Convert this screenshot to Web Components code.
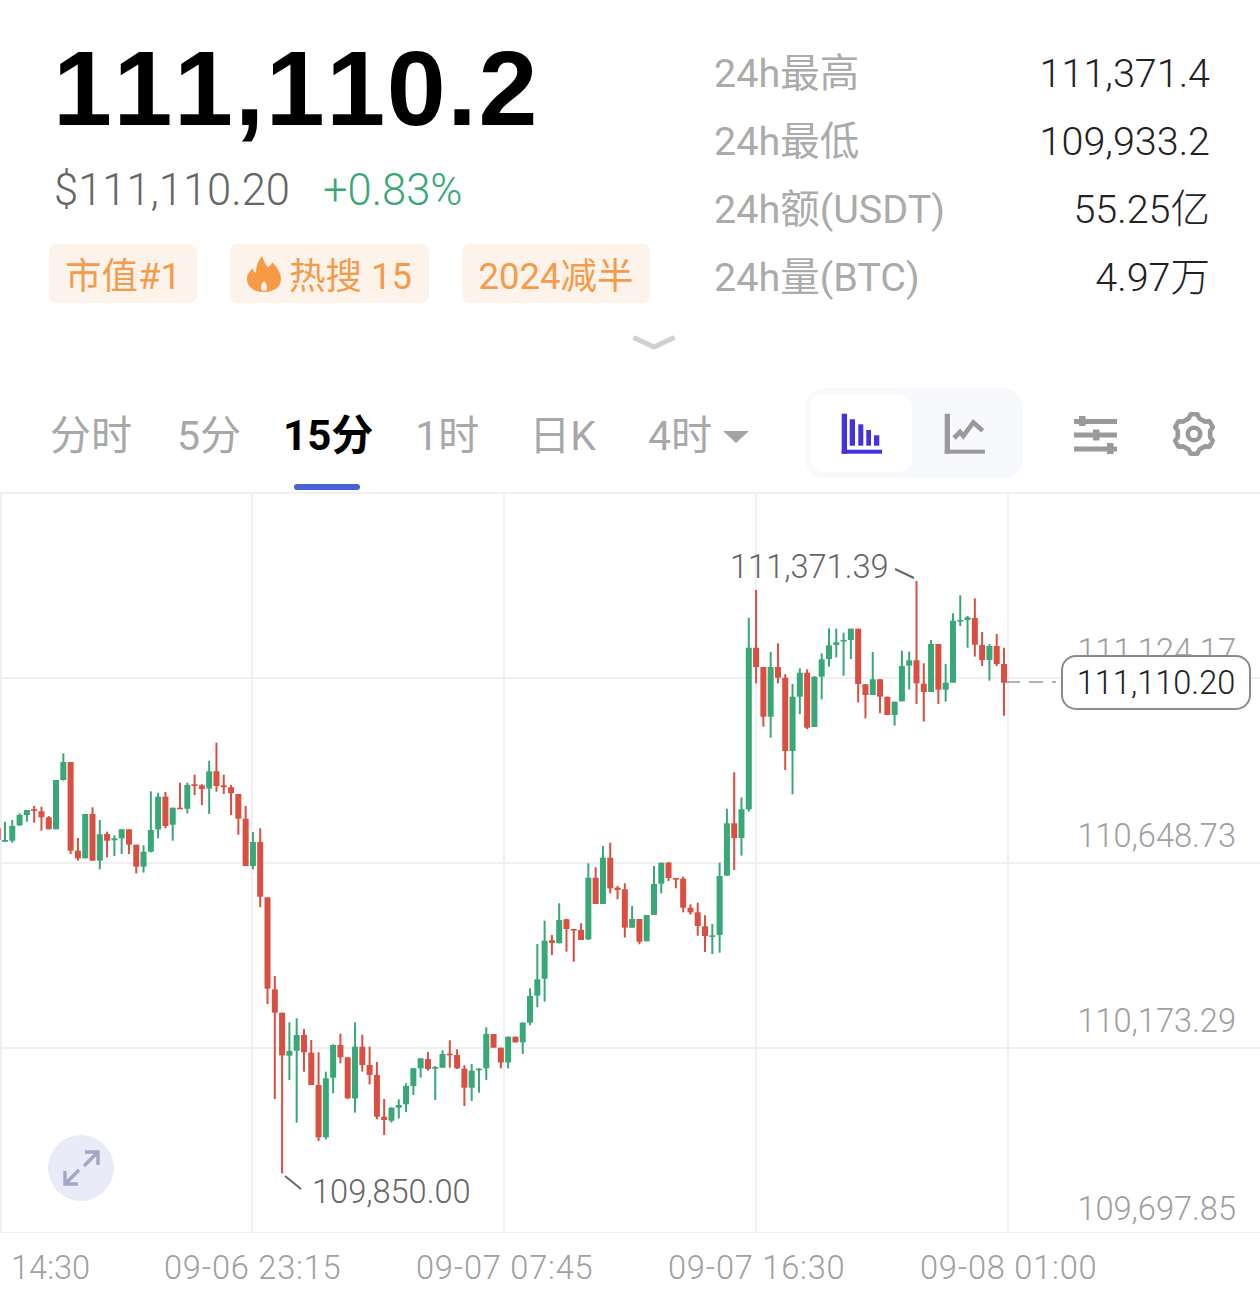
<!DOCTYPE html>
<html lang="zh">
<head>
<meta charset="utf-8">
<title>BTC</title>
<style>
  html, body { margin: 0; background: #fff; }
  body { width: 1260px; height: 1313px; overflow: hidden; font-family: Roboto, "Noto Sans CJK SC", sans-serif; }
</style>
</head>
<body>
<price-header>
  <stat-row slot="stats" label="24h最高" value="111,371.4"></stat-row>
  <stat-row slot="stats" label="24h最低" value="109,933.2"></stat-row>
  <stat-row slot="stats" label="24h额(USDT)" value="55.25亿"></stat-row>
  <stat-row slot="stats" label="24h量(BTC)" value="4.97万"></stat-row>
  <tag-chip slot="tags" style="width:148px">市值#1</tag-chip>
  <tag-chip slot="tags" style="width:199px" flame>热搜 15</tag-chip>
  <tag-chip slot="tags" style="width:188px">2024减半</tag-chip>
</price-header>
<period-bar></period-bar>
<kline-chart></kline-chart>
<time-axis></time-axis>

<script>
const CJK = 'Roboto, "Noto Sans CJK SC", sans-serif';

class StatRow extends HTMLElement {
  connectedCallback() {
    const shadow = this.attachShadow({ mode: 'open' });
    shadow.innerHTML = `
      <style>
        :host { display: flex; justify-content: space-between; align-items: baseline; height: 68px; line-height: 68px; font-size: 39.5px; }
        .l { color: #ababab; font-weight: 400; }
        .v { color: #222; font-weight: 300; }
      </style>
      <span class="l">${this.getAttribute('label')}</span>
      <span class="v">${this.getAttribute('value')}</span>`;
  }
}

class TagChip extends HTMLElement {
  connectedCallback() {
    const shadow = this.attachShadow({ mode: 'open' });
    const flame = this.hasAttribute('flame') ? `
      <svg width="34" height="36" viewBox="0 0 34 36">
        <path fill="#f79a45" d="M15 0c2 5 3 8 6 11 2-1 4-3 4-5 5 5 9 11 9 17 0 8-7 13-17 13S0 31 0 23c0-5 3-8 6-11 0 3 1 4 3 5C9 10 11 5 15 0z"/>
        <path fill="#fdf3ea" d="M17 25c2 2 3 4 3 7 0 2-1 3-3 3s-3-1-3-3c0-3 1-5 3-7z"/>
      </svg>` : '';
    shadow.innerHTML = `
      <style>
        :host { display: flex; align-items: center; justify-content: center; box-sizing: border-box; gap: 8px; height: 59px; background: #fdf3ea; border-radius: 7px; color: #f59b4c; font-size: 36.5px; font-weight: 400; white-space: nowrap; }
      </style>
      ${flame}<slot></slot>`;
  }
}

class PriceHeader extends HTMLElement {
  connectedCallback() {
    const shadow = this.attachShadow({ mode: 'open' });
    shadow.innerHTML = `
      <style>
        :host { display: block; position: relative; height: 380px; box-sizing: border-box; font-family: ${CJK}; }
        .cols { display: grid; grid-template-columns: 1fr 496px; padding: 39px 50px 0 49px; }
        .big { font: bold 106px/98px "Liberation Sans", sans-serif; font-kerning: none; color: #000; padding-left: 4px; height: 100px; letter-spacing: 1.6px; }
        .sub { display: flex; gap: 33px; font-size: 43.5px; line-height: 56px; margin-top: 24px; padding-left: 5px; font-weight: 300; }
        .usd { color: #666; }
        .pct { color: #38a878; }
        .tags { display: flex; gap: 33px; margin-top: 25px; }
        .stats { margin-top: 1px; }
        .chev { display: block; position: absolute; left: 632px; top: 335px; }
      </style>
      <div class="cols">
        <div>
          <div class="big">111,110.2</div>
          <div class="sub"><span class="usd">$111,110.20</span><span class="pct">+0.83%</span></div>
          <div class="tags"><slot name="tags"></slot></div>
        </div>
        <div class="stats"><slot name="stats"></slot></div>
      </div>
      <svg class="chev" width="44" height="16" viewBox="0 0 44 16">
        <path d="M1.5 2.5 22 12 42.5 2.5" fill="none" stroke="#d0d0d0" stroke-width="5"/>
      </svg>`;
  }
}

class PeriodBar extends HTMLElement {
  gearPath() {
    // engrane de 6 dientes
    let d = '';
    for (let i = 0; i < 6; i++) {
      const a = -Math.PI / 2 + i * Math.PI / 3;
      const pts = [[-.33, 16.5], [-.17, 20], [.17, 20], [.33, 16.5]];
      pts.forEach((p, j) => {
        const x = 22 + p[1] * Math.cos(a + p[0]);
        const y = 22 + p[1] * Math.sin(a + p[0]);
        d += (i === 0 && j === 0 ? 'M' : 'L') + x.toFixed(1) + ' ' + y.toFixed(1);
      });
    }
    return d + 'Z';
  }
  connectedCallback() {
    const shadow = this.attachShadow({ mode: 'open' });
    shadow.innerHTML = `
      <style>
        :host { display: block; height: 112px; font-family: ${CJK}; }
        .bar { display: flex; align-items: center; height: 112px; padding-left: 50px; box-sizing: border-box; font-size: 41px; font-weight: 400; color: #a8a8a8; }
        .tab { position: relative; white-space: nowrap; line-height: 110px; height: 110px; }
        .on { color: #000; font-weight: 700; font-size: 42px; }
        .on::after { content: ""; position: absolute; left: 11px; width: 66px; height: 6px; top: 103px; border-radius: 3px; background: #4a60d8; }
        .tri { width: 0; height: 0; border: 13px solid transparent; border-top: 12px solid #a3a3a3; border-bottom: 0; margin-left: 11px; margin-top: 2px; }
        .toggle { display: flex; box-sizing: border-box; width: 218px; height: 90px; padding: 6px 5px; margin-left: 56px; margin-top: -6px; background: #f8f9fc; border-radius: 20px; }
        .toggle div { display: flex; align-items: center; justify-content: center; flex: none; width: 102px; height: 78px; padding-top: 1px; box-sizing: border-box; }
        .toggle .act { background: #fff; border-radius: 14px; padding-left: 1px; }
        .toggle .oth { width: 106px; }
        svg { display: block; flex: none; }
        .s { margin-left: 51px; margin-top: -4px; }
        .g { margin-left: 54px; margin-top: -4px; }
      </style>
      <div class="bar">
        <span class="tab" style="margin-right:45px">分时</span>
        <span class="tab" style="margin-right:42px">5分</span>
        <span class="tab on" style="margin-right:42px">15分</span>
        <span class="tab" style="margin-right:50px">1时</span>
        <span class="tab" style="margin-right:52px">日K</span>
        <span class="tab">4时</span><span class="tri"></span>
        <div class="toggle">
          <div class="act">
            <svg width="42" height="42" viewBox="0 0 42 42" fill="#4433dd">
              <rect x=".7" y=".7" width="5.3" height="40"/><rect x=".7" y="36.7" width="40.3" height="4"/>
              <rect x="8.7" y="6.3" width="5.3" height="26.4"/><rect x="17.3" y="11.3" width="5" height="21.4"/>
              <rect x="25.3" y="17" width="4.7" height="15.7"/><rect x="33" y="22.3" width="5.3" height="10.4"/>
            </svg>
          </div>
          <div class="oth">
            <svg width="42" height="42" viewBox="0 0 42 42" fill="#9a9a9a">
              <rect x=".7" y=".7" width="5.3" height="40"/><rect x=".7" y="36.7" width="40.3" height="4"/>
              <path d="M10 25 16 19 19.3 23 29.3 9.5 38.7 17.8" fill="none" stroke="#9a9a9a" stroke-width="4.6"/>
            </svg>
          </div>
        </div>
        <svg class="s" width="44" height="44" viewBox="0 0 44 44" fill="#9a9a9a">
          <rect y="7" width="43" height="5"/><rect y="20.5" width="43" height="5"/><rect y="34.5" width="43" height="5"/>
          <rect x="5" y="4" width="6.5" height="10"/><rect x="19" y="17.5" width="6.5" height="11"/><rect x="33" y="31" width="6.5" height="11"/>
        </svg>
        <svg class="g" width="44" height="44" viewBox="0 0 44 44" fill="none" stroke="#9a9a9a">
          <path d="${this.gearPath()}" stroke-width="4.6" stroke-linejoin="round"/>
          <circle cx="22" cy="22" r="6.2" stroke-width="4.6"/>
        </svg>
      </div>`;
  }
}

// datos leidos de la captura: k, color, mecha arriba, mecha abajo, cuerpo arriba, cuerpo abajo
const SEGMENTOS = [
  [730, `-1 r 280 345 295 330|0 g 275 335 330 335|1 g 270 338 288 332|2 g 250 288 255 286|3 g 240 275 240 255|4 r 228 278 238 243|5 r 230 302 244 262|6 r 258 298 262 298|7 g 150 298 150 298|8 g 70 152 96 150|9 r 96 372 96 362|10 r 324 392 362 385|11 g 252 385 252 385|12 r 232 392 252 392|13 g 270 418 313 392|14 r 305 382 312 332|15 g 316 378 325 331|16 g 298 372 298 325|17 r 298 372 298 344|18 r 344 430 344 410|19 g 346 428 365 410|20 g 184 367 300 365|21 g 188 325 200 298|22 r 186 295 200 288|23 g 233 332 233 284|24 r 158 237 233 237|25 g 158 250 165 236|26 r 134 195 163 168|27 r 163 225 166 177|28 g 92 252 124 176|29 r 38 185 124 168|30 r 134 192 166 172|31 r 165 255 172 190|32 r 192 314 192 266|33 r 228 408 266 408|34 g 306 418 336 408|35 r 295 532 336 500`],
  [880, `36 r 52 372 52 326|37 r 288 657 328 398|38 r 398 880 398 526|39 g 427 600 513 527|40 g 415 728 465 512|41 r 447 575 465 517|42 r 480 615 518 615|43 r 517 783 615 772|44 g 575 778 595 772|45 g 493 640 495 593|46 r 461 550 495 532|47 r 532 657 532 655|48 g 427 698 500 655|49 r 464 575 500 555|50 r 500 613 555 585|51 r 546 718 585 710|52 r 657 765 710 720|53 g 682 728 683 722|54 g 658 716 675 683|55 g 610 696 618 673|56 g 565 645 565 618|57 g 535 593 535 565|58 r 516 572 537 567|59 g 558 660 561 566|60 g 511 563 522 563|61 r 481 563 521 525|62 r 508 567 525 565|63 r 556 678 566 623|64 g 552 663 572 623|65 g 565 638 566 570|66 g 442 600 462 565|67 r 462 503 462 503|68 r 503 565 503 547|69 g 470 565 470 547|70 r 470 487 470 487|71 g 427 522 428 487|72 g 325 436 348 428|73 g 192 382 298 347|74 g 122 365 182 296`],
  [760, `75 r 525 585 541 549|76 g 430 550 480 550|77 r 476 575 478 507|78 r 507 605 507 511|79 r 490 540 510 540|80 g 310 540 353 538|81 r 322 432 353 432|82 g 258 432 293 432|83 r 248 400 293 385|84 r 378 418 383 390|85 r 370 533 388 503|86 g 438 503 477 503|87 r 477 553 477 545|88 g 465 544 465 544|89 g 318 465 372 465|90 g 308 400 308 371|91 r 306 363 308 354|92 r 354 385 354 358|93 r 350 457 356 443|94 r 433 464 443 457|95 r 428 527 457 498|96 r 466 576 499 528|97 g 492 582 526 530|98 g 308 578 348 525|99 g 146 347 190 347|100 r 37 330 190 234|101 g 112 287 148 234`],
  [540, `102 g 233 815 323 808|103 r 150 430 323 381|104 r 381 560 381 530|105 g 336 593 381 530|106 r 310 430 381 413|107 r 403 690 413 633|108 g 432 763 470 633|109 g 385 522 398 470|110 r 388 567 398 563|111 g 408 561 410 561|112 g 340 478 358 410|113 g 265 380 316 357|114 g 266 352 307 315|115 g 278 407 300 304|116 g 266 357 266 300|117 r 266 487 266 432|118 r 432 535 433 465|119 g 336 465 418 465|120 r 418 520 418 470|121 r 470 525 470 525|122 g 485 557 485 525|123 g 332 484 378 484|124 g 335 448 361 377|125 r 123 492 361 430|126 r 370 545 431 456|127 g 300 456 312 456|128 r 312 492 312 449|129 g 372 485 428 449|130 g 220 428 242 428|131 g 166 258 240 244|132 g 228 323 232 240|133 r 175 350 234 314|134 r 276 378 315 360|135 g 312 422 318 360|136 r 282 378 318 372|137 r 323 527 372 428`]
];

class KlineChart extends HTMLElement {
  velas() {
    let out = '';
    SEGMENTOS.forEach(([y0, filas]) => {
      filas.split('|').forEach(f => {
        const [k, c, wt, wb, bt, bb] = f.split(' ');
        const col = c === 'g' ? '#38a878' : '#da4f41';
        const x = 5 + 7.292 * (+k);
        const yy = v => (y0 - 492 + v / 3).toFixed(1);
        const bh = Math.max(1.6, (bb - bt) / 3).toFixed(1);
        out += `<rect x="${(x - 1).toFixed(2)}" y="${yy(+wt)}" width="2" height="${((wb - wt) / 3).toFixed(1)}" fill="${col}"/>`;
        out += `<rect x="${(x - 3).toFixed(2)}" y="${yy(+bt)}" width="6" height="${bh}" fill="${col}"/>`;
      });
    });
    return out;
  }
  connectedCallback() {
    const shadow = this.attachShadow({ mode: 'open' });
    const lineas = [1, 252, 504, 756, 1008].map(x => `<rect x="${x - 1}" y="0" width="2" height="741" fill="#f0f0f2"/>`).join('')
      + [0, 185, 370, 555, 740].map(y => `<rect x="0" y="${y}" width="1260" height="2" fill="#f0f0f2"/>`).join('');
    shadow.innerHTML = `
      <style>
        :host { display: block; position: relative; height: 741px; overflow: hidden; font-family: ${CJK}; font-size: 32.6px; font-weight: 300; }
        svg { display: block; }
        .y { position: absolute; right: 24px; color: #a0a0a0; line-height: 40px; }
        .nota { position: absolute; color: #666; line-height: 40px; }
        .now { position: absolute; left: 1061px; top: 163px; width: 190px; height: 55px; box-sizing: border-box; border: 2px solid #8c8c8c; border-radius: 15px; background: #fff; color: #222; text-align: center; line-height: 53px; }
        .exp { position: absolute; left: 48px; top: 643px; width: 66px; height: 66px; border-radius: 50%; background: #e9ebf8; display: flex; align-items: center; justify-content: center; }
      </style>
      <svg width="1260" height="741">
        ${lineas}
        ${this.velas()}
        <path d="M1006 190H1056" stroke="#999" stroke-width="1.5" stroke-dasharray="14 9"/>
        <path d="M895 77 914 86" stroke="#666" stroke-width="2"/>
        <path d="M285 684 301 697" stroke="#666" stroke-width="2"/>
      </svg>
      <span class="y" style="top:139px">111,124.17</span>
      <span class="y" style="top:324px">110,648.73</span>
      <span class="y" style="top:509px">110,173.29</span>
      <span class="y" style="top:697px">109,697.85</span>
      <span class="nota" style="left:730px;top:55px">111,371.39</span>
      <span class="nota" style="left:312px;top:680px">109,850.00</span>
      <div class="now">111,110.20</div>
      <div class="exp">
        <svg width="38" height="38" viewBox="0 0 38 38" fill="none" stroke="#a4a7c2" stroke-width="3.4">
          <path d="M23 3H36V16M35 4 22 17M3 22V35H16M4 34 17 21"/>
        </svg>
      </div>`;
  }
}

class TimeAxis extends HTMLElement {
  connectedCallback() {
    const shadow = this.attachShadow({ mode: 'open' });
    shadow.innerHTML = `
      <style>
        :host { display: grid; grid-template-columns: 153px 252px 252px 252px 1fr; padding: 15px 0 0 11px; font-family: ${CJK}; font-size: 32.6px; font-weight: 300; color: #a0a0a0; line-height: 40px; white-space: nowrap; }
        .d { letter-spacing: .8px; }
      </style>
      <span>14:30</span><span class="d">09-06 23:15</span><span class="d">09-07 07:45</span><span class="d">09-07 16:30</span><span class="d">09-08 01:00</span>`;
  }
}

customElements.define('stat-row', StatRow);
customElements.define('tag-chip', TagChip);
customElements.define('price-header', PriceHeader);
customElements.define('period-bar', PeriodBar);
customElements.define('kline-chart', KlineChart);
customElements.define('time-axis', TimeAxis);
</script>
</body>
</html>
